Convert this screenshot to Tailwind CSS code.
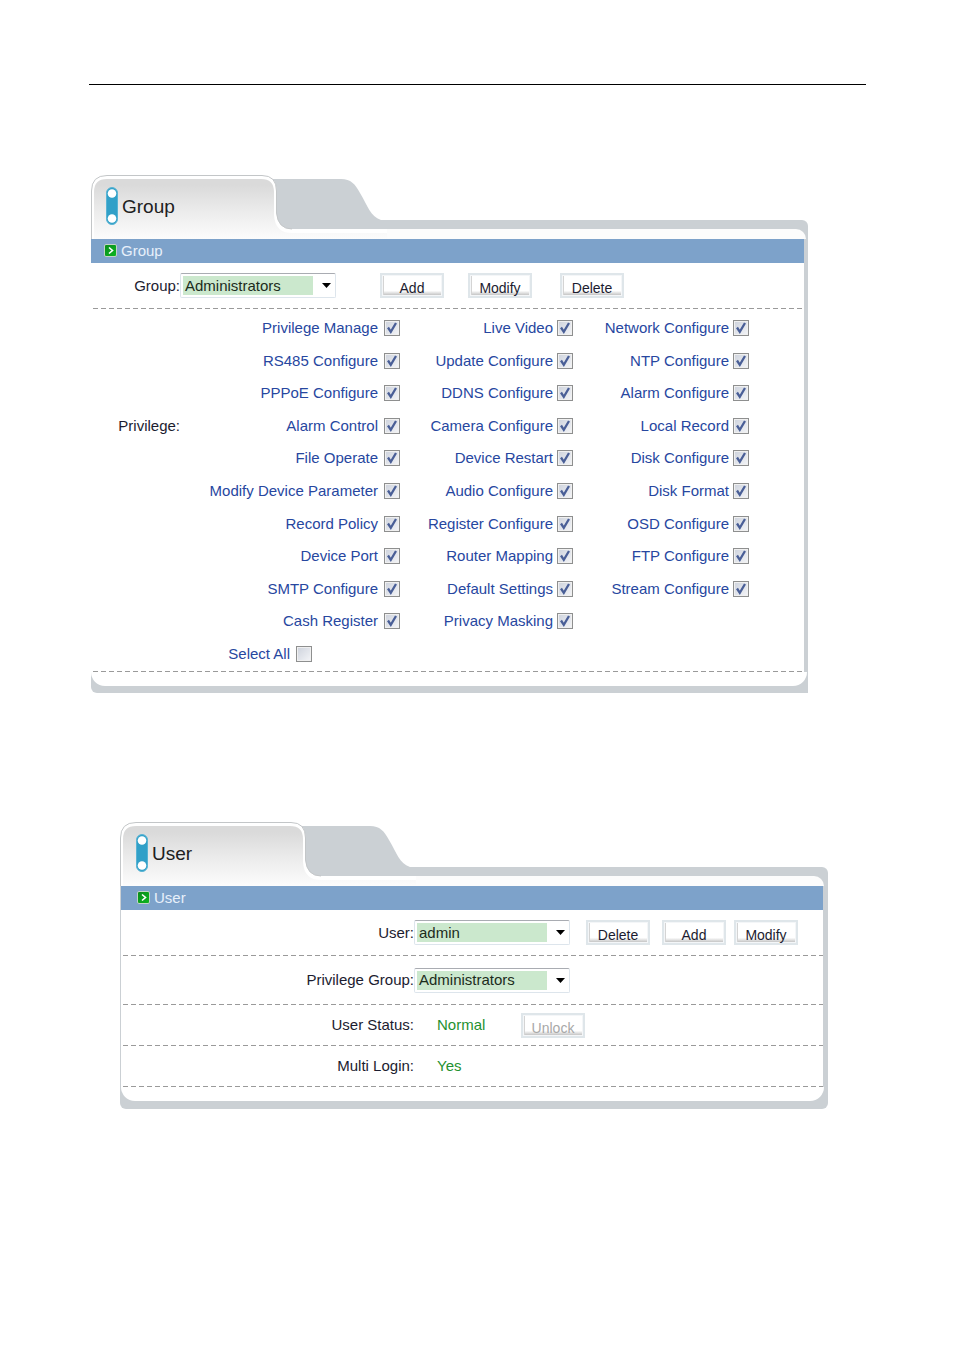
<!DOCTYPE html>
<html lang="en">
<head>
    <meta charset="UTF-8">
    <meta name="viewport" content="width=device-width, initial-scale=1.0">
    <script src="https://cdn.jsdelivr.net/npm/@tailwindcss/browser@4"></script>
    <title>Group and User</title>
</head>
<body class="bg-white font-['Liberation_Sans',Arial,sans-serif] text-[15px] leading-5 text-[#1c1c30]">
    <!-- shared shapes -->
    <svg class="absolute w-0 h-0" aria-hidden="true">
      <defs>
        <linearGradient id="tab-fill" x1="0" y1="0" x2="0" y2="1">
          <stop offset="0.1" stop-color="#dadada" />
          <stop offset="0.55" stop-color="#ececec" />
          <stop offset="1" stop-color="#fcfcfc" />
        </linearGradient>
        <linearGradient id="green-fill" x1="0" y1="0" x2="1" y2="1">
          <stop offset="0" stop-color="#0a8a1c" />
          <stop offset="1" stop-color="#0cb820" />
        </linearGradient>
      </defs>
      <symbol id="tabs" viewBox="0 0 296 64">
        <path d="M170 4H250C260 4 264 9 269 18C277 31 279 41 290 45H296V55H170Z" fill="#cbd0d4" />
        <path d="M0.5 64V16Q0.5 0.5 16 0.5H171Q185.500 0.5 185.500 16V38Q187 54 201 54H296V64Z" fill="#fff" />
        <path d="M0.5 64V16Q0.5 0.5 16 0.5H171Q185.500 0.5 185.500 16V38Q187 54 201 54" fill="none" stroke="#c3c6c8" />
        <path d="M3 64V17Q3 4 16 4H170Q183 4 183 17V40Q184 58 201 58H296V64Z" fill="url(#tab-fill)" />
      </symbol>
      <symbol id="pill" viewBox="0 0 12 38">
        <rect x="0.5" y="0.5" width="11" height="37" rx="5.500" fill="#31a0c8" stroke="#58b3d3" />
        <circle cx="6" cy="6.500" r="4.300" fill="#fff" />
        <circle cx="6" cy="31.500" r="4.300" fill="#fff" />
      </symbol>
      <symbol id="bullet" viewBox="0 0 13 13">
        <rect x="0.5" y="0.5" width="12" height="12" rx="1.500" fill="url(#green-fill)" stroke="#c2d2c8" />
        <path d="M5 3.500L8.500 6.500L5 9.500" fill="none" stroke="#fff" stroke-width="1.600" />
      </symbol>
      <symbol id="arrow" viewBox="0 0 9 5">
        <path d="M0 0H9L4.500 5Z" fill="#000" />
      </symbol>
      <symbol id="tick" viewBox="0 0 16 16">
        <path d="M4 7.500L6.800 11.800L12 3" fill="none" stroke="#4a5f97" stroke-width="2.300" />
      </symbol>
    </svg>

    <main class="mx-[89px]">
      <div class="h-[85px] border-b border-black"></div>

      <!-- group -->
      <section class="mt-[90px] ml-[2px] max-w-[717px]">
        <header class="relative flex h-16">
          <svg class="w-[296px] h-16 shrink-0"><use href="#tabs" /></svg>
          <div class="flex-1 self-end h-[19px] pt-[9px] pr-[2px] bg-[#cbd0d4] rounded-tr-md">
            <div class="h-full bg-[#fcfcfc] rounded-tr-[14px]"></div>
          </div>
          <div class="absolute left-[15px] top-3 flex items-center gap-1">
            <svg class="w-3 h-[38px]"><use href="#pill" /></svg>
            <h1 class="pt-[2px] text-[19px] leading-6 text-[#202020]">Group</h1>
          </div>
        </header>
        <div class="border-r-4 border-[#cbd0d4]">
          <div class="flex items-center gap-1 h-6 pl-[13px] bg-[#7da2ca] text-[#e8f0fa]">
            <svg class="w-[13px] h-[13px] mb-[2px]"><use href="#bullet" /></svg>
            <h2>Group</h2>
          </div>
          <div class="flex items-center h-[45px]">
            <label class="w-[89px] text-right" for="group">Group:</label>
            <div class="relative w-[156px]">
              <select class="block appearance-none w-full h-[25px] border border-[#dde5ec] border-t-[#a9acb2] rounded-xs p-[2px] pr-[22px] bg-[#cbe8cd] bg-clip-content indent-[2px] leading-[18px] text-[#1c2c1c]" id="group">
                <option>Administrators</option>
              </select>
              <svg class="absolute right-[5px] top-[10px] w-[9px] h-[5px] pointer-events-none"><use href="#arrow" /></svg>
            </div>
            <button class="ml-11 w-16 h-[25px] pt-[5px] border-2 border-[#dfe6ea] bg-linear-to-t from-[#b8b8b8] to-white to-25% shadow-[inset_0_0_0_1px_#f4f6f8,inset_2px_0_0_#d4d4d4] text-sm leading-4">Add</button>
            <button class="ml-6 w-16 h-[25px] pt-[5px] border-2 border-[#dfe6ea] bg-linear-to-t from-[#b8b8b8] to-white to-25% shadow-[inset_0_0_0_1px_#f4f6f8,inset_2px_0_0_#d4d4d4] text-sm leading-4">Modify</button>
            <button class="ml-7 w-16 h-[25px] pt-[5px] border-2 border-[#dfe6ea] bg-linear-to-t from-[#b8b8b8] to-white to-25% shadow-[inset_0_0_0_1px_#f4f6f8,inset_2px_0_0_#d4d4d4] text-sm leading-4">Delete</button>
          </div>
          <div class="h-px ml-[2px] bg-[repeating-linear-gradient(90deg,#9a9a9a_0_5px,transparent_5px_8px)]"></div>
          <fieldset class="flex items-start pt-[3px] pb-px">
            <div class="w-[89px] pt-[104px] text-right" id="privilege">Privilege:</div>
            <div class="grid grid-cols-[220px_173px_176px] auto-rows-fr min-h-[358px] text-[#27479f]" id="privileges" role="group" aria-labelledby="privilege"></div>
          </fieldset>
          <div class="h-px ml-[2px] bg-[repeating-linear-gradient(90deg,#9a9a9a_0_5px,transparent_5px_8px)]"></div>
        </div>
        <div class="pb-[7px] pr-px bg-[#cbd0d4] rounded-bl-md">
          <div class="h-[14px] bg-white rounded-b-[14px]"></div>
        </div>
      </section>

      <!-- user -->
      <section class="mt-[129px] ml-[31px] max-w-[708px]">
        <header class="relative flex h-16">
          <svg class="w-[296px] h-16 shrink-0"><use href="#tabs" /></svg>
          <div class="flex-1 self-end h-[19px] pt-[9px] pr-1 bg-[#cbd0d4] rounded-tr-md">
            <div class="h-full bg-[#fcfcfc] rounded-tr-[14px]"></div>
          </div>
          <div class="absolute left-4 top-3 flex items-center gap-1">
            <svg class="w-3 h-[38px]"><use href="#pill" /></svg>
            <h1 class="pt-[2px] text-[19px] leading-6 text-[#202020]">User</h1>
          </div>
        </header>
        <div class="border-l border-r-5 border-[#cbd0d4]">
          <div class="flex items-center gap-1 h-6 pl-4 bg-[#7da2ca] text-[#e8f0fa]">
            <svg class="w-[13px] h-[13px] mb-[2px]"><use href="#bullet" /></svg>
            <h2>User</h2>
          </div>
          <div class="flex items-center h-[45px]">
            <label class="w-[293px] text-right" for="user">User:</label>
            <div class="relative w-[156px]">
              <select class="block appearance-none w-full h-[25px] border border-[#dde5ec] border-t-[#a9acb2] rounded-xs p-[2px] pr-[22px] bg-[#cbe8cd] bg-clip-content indent-[2px] leading-[18px] text-[#1c2c1c]" id="user">
                <option>admin</option>
              </select>
              <svg class="absolute right-[5px] top-[10px] w-[9px] h-[5px] pointer-events-none"><use href="#arrow" /></svg>
            </div>
            <button class="ml-4 w-16 h-[25px] pt-[5px] border-2 border-[#dfe6ea] bg-linear-to-t from-[#b8b8b8] to-white to-25% shadow-[inset_0_0_0_1px_#f4f6f8,inset_2px_0_0_#d4d4d4] text-sm leading-4">Delete</button>
            <button class="ml-3 w-16 h-[25px] pt-[5px] border-2 border-[#dfe6ea] bg-linear-to-t from-[#b8b8b8] to-white to-25% shadow-[inset_0_0_0_1px_#f4f6f8,inset_2px_0_0_#d4d4d4] text-sm leading-4">Add</button>
            <button class="ml-2 w-16 h-[25px] pt-[5px] border-2 border-[#dfe6ea] bg-linear-to-t from-[#b8b8b8] to-white to-25% shadow-[inset_0_0_0_1px_#f4f6f8,inset_2px_0_0_#d4d4d4] text-sm leading-4">Modify</button>
          </div>
          <div class="h-px ml-[2px] bg-[repeating-linear-gradient(90deg,#9a9a9a_0_5px,transparent_5px_8px)]"></div>
          <div class="flex items-center h-12">
            <label class="w-[293px] text-right" for="privilege-group">Privilege Group:</label>
            <div class="relative w-[156px]">
              <select class="block appearance-none w-full h-[25px] border border-[#dde5ec] border-t-[#a9acb2] rounded-xs p-[2px] pr-[22px] bg-[#cbe8cd] bg-clip-content indent-[2px] leading-[18px] text-[#1c2c1c]" id="privilege-group">
                <option>Administrators</option>
              </select>
              <svg class="absolute right-[5px] top-[10px] w-[9px] h-[5px] pointer-events-none"><use href="#arrow" /></svg>
            </div>
          </div>
          <div class="h-px ml-[2px] bg-[repeating-linear-gradient(90deg,#9a9a9a_0_5px,transparent_5px_8px)]"></div>
          <div class="flex items-center h-10">
            <p class="w-[293px] text-right">User Status:</p>
            <p class="w-[107px] pl-[23px] text-[#1f9130]">Normal</p>
            <button class="w-16 h-[25px] pt-[5px] border-2 border-[#dfe6ea] bg-linear-to-t from-[#b8b8b8] to-white to-25% shadow-[inset_0_0_0_1px_#f4f6f8,inset_2px_0_0_#d4d4d4] text-sm leading-4 text-[#a8a8a8]" disabled>Unlock</button>
          </div>
          <div class="h-px ml-[2px] bg-[repeating-linear-gradient(90deg,#9a9a9a_0_5px,transparent_5px_8px)]"></div>
          <div class="flex items-center h-10">
            <p class="w-[293px] text-right">Multi Login:</p>
            <p class="pl-[23px] text-[#1f9130]">Yes</p>
          </div>
          <div class="h-px ml-[2px] bg-[repeating-linear-gradient(90deg,#9a9a9a_0_5px,transparent_5px_8px)]"></div>
        </div>
        <div class="pb-2 pl-px pr-1 bg-[#cbd0d4] rounded-b-md">
          <div class="h-[14px] bg-white rounded-b-[14px]"></div>
        </div>
      </section>
    </main>
</body>

<script type="text/javascript">
  const privileges = [
    "Privilege Manage", "Live Video", "Network Configure",
    "RS485 Configure", "Update Configure", "NTP Configure",
    "PPPoE Configure", "DDNS Configure", "Alarm Configure",
    "Alarm Control", "Camera Configure", "Local Record",
    "File Operate", "Device Restart", "Disk Configure",
    "Modify Device Parameter", "Audio Configure", "Disk Format",
    "Record Policy", "Register Configure", "OSD Configure",
    "Device Port", "Router Mapping", "FTP Configure",
    "SMTP Configure", "Default Settings", "Stream Configure",
    "Cash Register", "Privacy Masking",
  ];

  const checkbox = (name, checked, cell) => `
    <label class="flex items-center justify-end whitespace-nowrap ${cell}">
      ${name}
      <span class="relative w-4 h-4">
        <input class="peer block appearance-none w-4 h-4 border border-[#8e8f8f] bg-linear-to-br from-[#cdd2dc] to-[#f4f5f8] shadow-[inset_0_0_0_1px_#f0f0f0]" type="checkbox" ${checked ? "checked" : ""}>
        <svg class="absolute inset-0 w-4 h-4 hidden peer-checked:block pointer-events-none"><use href="#tick" /></svg>
      </span>
    </label>`;

  const list = document.getElementById("privileges");
  list.innerHTML = privileges.map((name, i) => checkbox(name, true, i % 3 ? "gap-1" : "gap-[6px]")).join("")
    + checkbox("Select All", false, "gap-[6px] col-start-1 pr-[88px]");

  const boxes = [...list.querySelectorAll("input")];
  const selectAll = boxes.pop();
  selectAll.onchange = () => boxes.forEach((box) => { box.checked = selectAll.checked; });
</script>
</html>
